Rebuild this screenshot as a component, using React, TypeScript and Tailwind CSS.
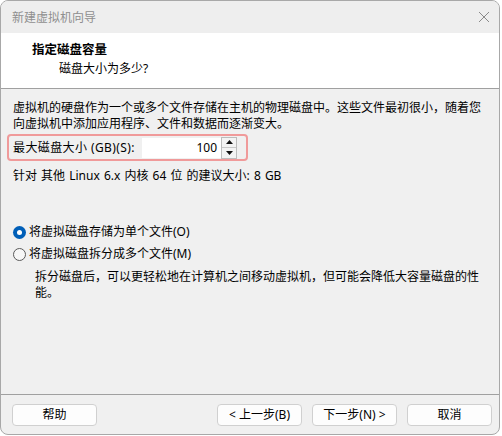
import { useState } from 'react';

const font = "font-['Noto_Sans','Noto_Sans_CJK_SC',sans-serif]";

const Radio = ({ checked, label, onClick }: { checked: boolean; label: string; onClick: () => void }) => (
  <button type="button" onClick={onClick} className="flex h-[16px] items-center gap-[3px] text-left">
    {checked ? (
      <span className="flex size-[13px] items-center justify-center rounded-full bg-[#005fb8]">
        <span className="size-[5px] rounded-full bg-white" />
      </span>
    ) : (
      <span className="size-[13px] rounded-full border border-[#5a5a5a] bg-[#f7f7f7]" />
    )}
    <span>{label}</span>
  </button>
);

const WizardButton = ({ children, className = '' }: { children: React.ReactNode; className?: string }) => (
  <button
    type="button"
    className={`flex h-[22px] w-[85px] items-center justify-center rounded-[4px] border border-[#d0d0d0] bg-[#fdfdfd] leading-[16px] ${className}`}
  >
    {children}
  </button>
);

export default function App() {
  const [size, setSize] = useState(100);
  const [single, setSingle] = useState(true);

  return (
    <div className={`h-[436px] w-[502px] bg-white text-[12px] text-black ${font}`}>
      <div className="flex h-[435px] w-[500px] flex-col overflow-hidden rounded-[8px] border border-[#a8a8a8] bg-[#f0f0f0]">
        {/* title bar */}
        <div className="flex h-[32px] flex-none items-center justify-between bg-[#eeeeee] pl-[11px] pr-[8px] text-[#8f8f8f]">
          <span className="mt-[1px] leading-[16px]">新建虚拟机向导</span>
          <svg width="12" height="12" viewBox="0 0 12 12" className="mr-[1px]">
            <path d="M1 1 L11 11 M11 1 L1 11" stroke="#8a8a8a" strokeWidth="1" fill="none" />
          </svg>
        </div>

        {/* header */}
        <div className="h-[56px] flex-none border-b border-[#a0a0a0] bg-white pl-[31px] pt-[9px] leading-[16px]">
          <div className="text-[12.5px] font-bold">指定磁盘容量</div>
          <div className="mt-[3px] pl-[27px]">磁盘大小为多少?</div>
        </div>

        {/* body */}
        <div className="flex-1 px-[12px] pt-[11px] leading-[16px]">
          <p>
            虚拟机的硬盘作为一个或多个文件存储在主机的物理磁盘中。这些文件最初很小，随着您
            <br />
            向虚拟机中添加应用程序、文件和数据而逐渐变大。
          </p>

          <div className="-ml-[6px] mt-[2px] flex h-[27px] w-[241px] items-center rounded-[4px] border-2 border-[#f09a9a] pl-[4px]">
            <span className="w-[129px] tracking-[0.4px]">最大磁盘大小 (GB)(S):</span>
            <div className="flex h-[20px] w-[79px] items-center justify-end bg-white pr-[4px]">
              {size}
            </div>
            <div className="flex h-[22px] w-[16px] flex-col border border-[#bcbcbc] bg-[#f3f3f3]">
              <button
                type="button"
                onClick={() => setSize(size + 1)}
                className="flex flex-1 items-center justify-center border-b border-[#c8c8c8]"
              >
                <svg width="7" height="4" viewBox="0 0 7 4">
                  <path d="M3.5 0 L7 4 L0 4 Z" fill="#111" />
                </svg>
              </button>
              <button
                type="button"
                onClick={() => setSize(Math.max(1, size - 1))}
                className="flex flex-1 items-center justify-center"
              >
                <svg width="7" height="4" viewBox="0 0 7 4">
                  <path d="M0 0 L7 0 L3.5 4 Z" fill="#111" />
                </svg>
              </button>
            </div>
          </div>

          <p className="mt-[7px] [word-spacing:1px]">针对 其他 Linux 6.x 内核 64 位 的建议大小: 8 GB</p>

          <div className="mt-[40px] flex flex-col gap-[6px]">
            <Radio checked={single} label="将虚拟磁盘存储为单个文件(O)" onClick={() => setSingle(true)} />
            <Radio checked={!single} label="将虚拟磁盘拆分成多个文件(M)" onClick={() => setSingle(false)} />
          </div>

          <p className="mt-[7px] pl-[22px]">
            拆分磁盘后，可以更轻松地在计算机之间移动虚拟机，但可能会降低大容量磁盘的性
            <br />
            能。
          </p>
        </div>

        {/* footer */}
        <div className="flex h-[40px] flex-none items-start border-t border-[#a0a0a0] pl-[11px] pr-[7px] pt-[9px]">
          <WizardButton>帮助</WizardButton>
          <div className="flex-1" />
          <div className="flex gap-[10px]">
            <WizardButton>&lt; 上一步(B)</WizardButton>
            <WizardButton>下一步(N) &gt;</WizardButton>
            <WizardButton>取消</WizardButton>
          </div>
        </div>
      </div>
    </div>
  );
}
